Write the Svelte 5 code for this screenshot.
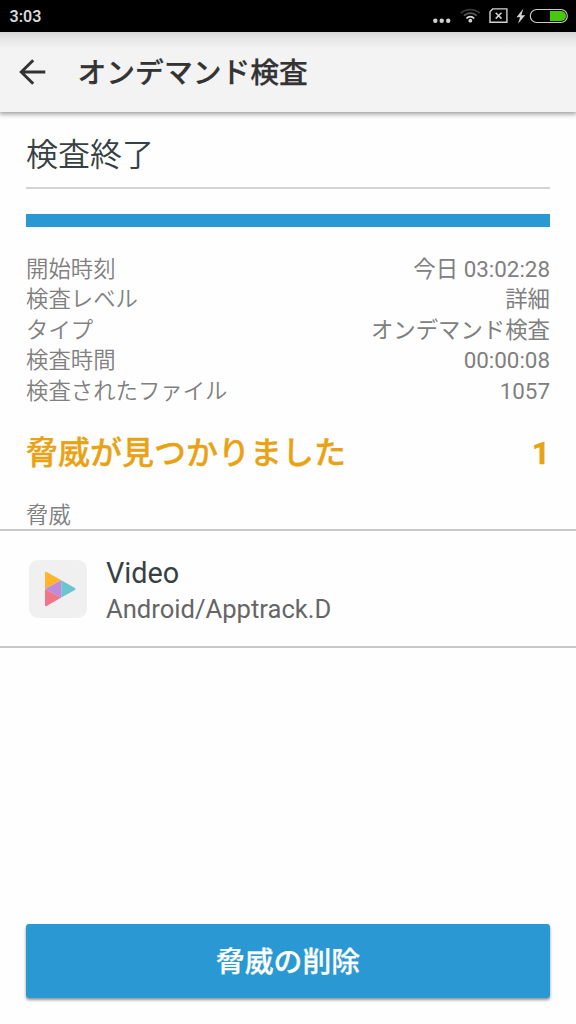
<script>
  const details = [
    { label: '開始時刻', value: '今日 03:02:28' },
    { label: '検査レベル', value: '詳細' },
    { label: 'タイプ', value: 'オンデマンド検査' },
    { label: '検査時間', value: '00:00:08' },
    { label: '検査されたファイル', value: '1057' }
  ];
</script>

<div class="screen">
  <div class="status">
    <span class="clock">3:03</span>
    <svg width="140" height="32" viewBox="0 0 140 32" aria-hidden="true">
      <g fill="#d2d2d2">
        <circle cx="6.3" cy="20.7" r="2.2" />
        <circle cx="12.7" cy="20.7" r="2.2" />
        <circle cx="19.2" cy="20.7" r="2.2" />
        <circle cx="41.3" cy="20.7" r="1.9" />
        <path d="M94.4 8.5L87.5 17.3h3.6l-2.1 6.5 7.2-8.6h-3.9z" />
      </g>
      <g fill="none" stroke-width="1.8">
        <path d="M32 13.2C37 8.5 45.6 8.5 50.6 13.2" stroke="#383838" />
        <path d="M34.9 15.7C38.5 12.2 44.1 12.2 47.7 15.7" stroke="#5b5b5b" />
        <path d="M37.4 18.5C39.6 16.1 43 16.1 45.2 18.5" stroke="#dedede" />
        <path d="M63.7 8.9H77.9V22.2H61V11.8z" stroke="#d2d2d2" stroke-width="1.4" />
        <path d="M66.7 12.8l5.8 5.8m0-5.8l-5.8 5.8" stroke="#d2d2d2" stroke-width="1.5" />
        <rect x="101.3" y="9.5" width="37" height="13" rx="6.5" stroke="#c8c8c8" stroke-width="1.2" />
      </g>
      <path d="M121 11H132a5 5 0 0 1 0 10H121z" fill="#48c80b" />
    </svg>
  </div>

  <header>
    <svg width="28" height="28" viewBox="0 0 28 28" aria-hidden="true">
      <path d="M27.3 14H4M15.2 2.2L3.3 14l11.9 11.8" fill="none" stroke="#333" stroke-width="3" />
    </svg>
    <h1>オンデマンド検査</h1>
  </header>

  <main>
    <section class="summary">
      <h2>検査終了</h2>
      <div class="progress"></div>
      <dl>
        {#each details as row}
          <div class="row"><dt>{row.label}</dt><dd>{row.value}</dd></div>
        {/each}
      </dl>
      <div class="found"><span>脅威が見つかりました</span><span class="count">1</span></div>
      <h3>脅威</h3>
    </section>

    <div class="threat">
      <svg width="58" height="58" viewBox="0 0 58 58" aria-hidden="true">
        <rect width="58" height="58" rx="9" fill="#f0f0f0" />
        <path d="M16 13q0-2 1.7-1L32.3 20.2 16 29z" fill="#ffb42f" />
        <path d="M32.3 20.2L46 28q1.4 1 0 2L32.3 37.6z" fill="#68c6ce" />
        <path d="M16 29l16.3 8.6L17.7 46q-1.7 1-1.7-1z" fill="#ef7789" />
        <path d="M32.3 20.2v17.4L16 29z" fill="#bd8bda" />
      </svg>
      <div class="names">
        <span class="app">Video</span>
        <span class="kind">Android/Apptrack.D</span>
      </div>
    </div>
  </main>

  <footer><button>脅威の削除</button></footer>
</div>

<style>
  :global(body) { margin: 0; background: #fefefe; }
  .screen {
    width: 576px;
    height: 1024px;
    display: flex;
    flex-direction: column;
    background: #fefefe;
    font-family: Roboto, "Noto Sans CJK JP", sans-serif;
    overflow: hidden;
  }
  h1, h2, h3, dl, dd { margin: 0; font-weight: 400; }
  svg { display: block; flex: none; }
  .status {
    height: 32px;
    flex: none;
    display: flex;
    justify-content: space-between;
    padding: 0 7px 0 9.5px;
    background: #000;
  }
  .clock { color: #d8d8d8; font-size: 16px; font-weight: 600; line-height: 33px; }
  header {
    height: 80px;
    flex: none;
    display: flex;
    align-items: center;
    gap: 32px;
    padding-left: 17.5px;
    box-sizing: border-box;
    background: linear-gradient(#d6d6d6, #e6e6e6 7px, #f3f3f3 17px);
    box-shadow: 0 1px 5px 1px rgba(0, 0, 0, 0.4);
  }
  h1 { padding-top: 2px; color: #333; font-size: 28.8px; font-weight: 500; line-height: 40px; -webkit-text-stroke: 0.25px; }
  main { flex: 1; }
  .summary { padding: 0 26px; }
  h2 {
    height: 75px;
    border-bottom: 2px solid #d3d3d3;
    color: #374144;
    font-size: 32px;
    font-weight: 350;
    line-height: 86px;
  }
  .progress { height: 13px; margin: 25px 0 26px; background: #2a99d3; }
  .row {
    display: flex;
    justify-content: space-between;
    height: 30.4px;
    color: #808080;
    font-size: 22.4px;
    font-weight: 350;
    line-height: 33px;
  }
  .found {
    display: flex;
    justify-content: space-between;
    height: 88px;
    color: #e9a213;
    font-size: 32px;
    font-weight: 500;
    line-height: 96px;
    -webkit-text-stroke: 0.3px;
  }
  .count { font-weight: 700; }
  h3 { height: 36px; color: #808080; font-size: 22.4px; font-weight: 350; line-height: 45px; }
  .threat {
    display: flex;
    gap: 19.4px;
    height: 119px;
    box-sizing: border-box;
    padding: 29px 0 0 28.6px;
    border-top: 2px solid #c9c9c9;
    border-bottom: 2px solid #c9c9c9;
  }
  .names { display: flex; flex-direction: column; margin-top: -5px; }
  .app { color: #374144; font-size: 28.8px; line-height: 36px; }
  .kind { color: #666; font-size: 25.6px; line-height: 36px; }
  footer { flex: none; padding: 0 26px 26px; }
  button {
    display: block;
    width: 100%;
    height: 74px;
    padding: 0;
    border: 0;
    border-radius: 3px;
    background: #2a99d3;
    box-shadow: 0 2px 3px rgba(0, 0, 0, 0.42);
    color: #fff;
    font: 500 28.8px/77px Roboto, "Noto Sans CJK JP", sans-serif;
    -webkit-text-stroke: 0.25px;
  }
</style>
